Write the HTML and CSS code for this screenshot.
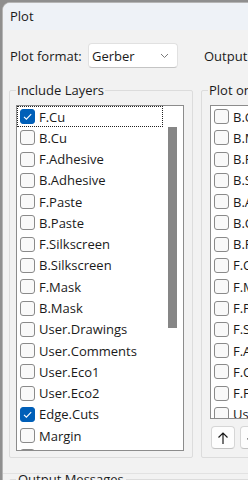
FILE: index.html
```html
<!DOCTYPE html>
<html lang="en">
  <head>
    <meta charset="UTF-8" />
    <meta name="viewport" content="width=device-width, initial-scale=1.0" />
    <title>Plot</title>
    <link rel="stylesheet" href="styles.css">
  </head>
  <body>
    <div class="window">
      <div class="titlebar">Plot</div>

      <div class="format-row">
        <span class="format-label">Plot format:</span>
        <div class="combo">
          <span>Gerber</span>
          <svg class="chevron" width="9" height="6" viewBox="0 0 9 6">
            <path d="M1 1 L4.5 4.5 L8 1" fill="none" stroke="#7a7a7a" stroke-width="1" />
          </svg>
        </div>
        <span class="output-label">Output directory:</span>
      </div>

      <div class="columns">
        <fieldset class="group layers-group">
          <legend>Include Layers</legend>
          <div class="listbox">
            <ul class="items">
              <li class="item focused"><span class="check checked"></span>F.Cu</li>
              <li class="item"><span class="check"></span>B.Cu</li>
              <li class="item"><span class="check"></span>F.Adhesive</li>
              <li class="item"><span class="check"></span>B.Adhesive</li>
              <li class="item"><span class="check"></span>F.Paste</li>
              <li class="item"><span class="check"></span>B.Paste</li>
              <li class="item"><span class="check"></span>F.Silkscreen</li>
              <li class="item"><span class="check"></span>B.Silkscreen</li>
              <li class="item"><span class="check"></span>F.Mask</li>
              <li class="item"><span class="check"></span>B.Mask</li>
              <li class="item"><span class="check"></span>User.Drawings</li>
              <li class="item"><span class="check"></span>User.Comments</li>
              <li class="item"><span class="check"></span>User.Eco1</li>
              <li class="item"><span class="check"></span>User.Eco2</li>
              <li class="item"><span class="check checked"></span>Edge.Cuts</li>
              <li class="item"><span class="check"></span>Margin</li>
              <li class="item"><span class="check"></span>B.Courtyard</li>
            </ul>
            <div class="scrollbar"><div class="thumb"></div></div>
          </div>
        </fieldset>

        <fieldset class="group plot-on-group">
          <legend>Plot on All Layers</legend>
          <div class="listbox narrow">
            <ul class="items">
              <li class="item"><span class="check"></span>B.Cu</li>
              <li class="item"><span class="check"></span>B.Mask</li>
              <li class="item"><span class="check"></span>B.Paste</li>
              <li class="item"><span class="check"></span>B.Silkscreen</li>
              <li class="item"><span class="check"></span>B.Adhesive</li>
              <li class="item"><span class="check"></span>B.Courtyard</li>
              <li class="item"><span class="check"></span>B.Fab</li>
              <li class="item"><span class="check"></span>F.Courtyard</li>
              <li class="item"><span class="check"></span>F.Mask</li>
              <li class="item"><span class="check"></span>F.Paste</li>
              <li class="item"><span class="check"></span>F.Silkscreen</li>
              <li class="item"><span class="check"></span>F.Adhesive</li>
              <li class="item"><span class="check"></span>F.Cu</li>
              <li class="item"><span class="check"></span>F.Fab</li>
              <li class="item"><span class="check"></span>User.Drawings</li>
            </ul>
          </div>
          <div class="buttons">
            <button class="icon-btn">
              <svg width="12" height="14" viewBox="0 0 12 14">
                <path d="M6 13 V2 M1.5 6.5 L6 2 L10.5 6.5" fill="none" stroke="#1a1a1a" stroke-width="1.2" />
              </svg>
            </button>
            <button class="icon-btn">
              <svg width="12" height="14" viewBox="0 0 12 14">
                <path d="M6 1 V12 M1.5 7.5 L6 12 L10.5 7.5" fill="none" stroke="#1a1a1a" stroke-width="1.2" />
              </svg>
            </button>
          </div>
        </fieldset>
      </div>

      <div class="splitter"></div>
      <fieldset class="group messages-group">
        <legend>Output Messages</legend>
      </fieldset>
    </div>
  </body>
</html>
```

FILE: styles.css
```css
html,
body {
  margin: 0;
  height: 100%;
  overflow: hidden;
}
body {
  background-color: #8f8f8f;
  font-family: "Open Sans", "Noto Sans", sans-serif;
  font-size: 13px;
  color: #1a1a1a;
}
.window {
  margin: 2px 0 0 2px;
  width: 440px;
  height: 540px;
  background-color: #f2f2f2;
  border: 1px solid #b5b5b5;
  border-radius: 8px 0 0 0;
  overflow: hidden;
}
.titlebar {
  height: 27px;
  line-height: 27px;
  padding-left: 7px;
  background-color: #eef2f7;
}
.format-row {
  display: flex;
  align-items: center;
  margin-top: 13px;
  padding-left: 7px;
  height: 25px;
}
.format-label {
  width: 78px;
}
.combo {
  display: flex;
  align-items: center;
  justify-content: space-between;
  box-sizing: border-box;
  width: 90px;
  height: 25px;
  padding: 0 8px 0 3px;
  background-color: #fff;
  border: 1px solid #e1e1e1;
  border-bottom-color: #c4c4c4;
  border-radius: 4px;
}
.output-label {
  margin-left: 26px;
}
.columns {
  display: flex;
  gap: 8px;
  margin-top: 14px;
  margin-left: 6px;
}
.group {
  margin: 0;
  min-width: 0;
  border: 1px solid #dcdcdc;
  border-radius: 2px;
}
.group legend {
  padding: 0 1px;
  line-height: 16px;
}
.layers-group {
  box-sizing: border-box;
  width: 184px;
  padding: 7px 8px 6px 6px;
}
.plot-on-group {
  box-sizing: border-box;
  width: 220px;
  padding: 7px 0 7px 6px;
}
.listbox {
  display: flex;
  box-sizing: border-box;
  height: 346px;
  background-color: #fff;
  border: 1px solid #8c8c8c;
  overflow: hidden;
}
.listbox.narrow {
  height: 314px;
  margin-left: 2px;
}
.items {
  list-style: none;
  margin: 0;
  padding: 0;
  flex: 1;
}
.layers-group .items {
  flex: 0 0 146px;
}
.item {
  display: flex;
  align-items: center;
  box-sizing: border-box;
  height: 21.27px;
  padding-left: 3px;
  white-space: nowrap;
}
.item.focused {
  outline: 1px dotted #222;
  outline-offset: -1px;
}
.check {
  box-sizing: border-box;
  flex: 0 0 15px;
  height: 15px;
  margin-right: 4px;
  border: 1px solid #8a8a8a;
  border-radius: 3px;
  background-color: #f9f9f9;
}
.check.checked {
  border-color: #005fb8;
  background-color: #005fb8;
  background-image: url("data:image/svg+xml,%3Csvg xmlns='http://www.w3.org/2000/svg' width='13' height='13' viewBox='0 0 13 13'%3E%3Cpath d='M3 6.8 L5.4 9.2 L10.2 4.2' fill='none' stroke='%23fff' stroke-width='1.1'/%3E%3C/svg%3E");
  background-position: center;
  background-repeat: no-repeat;
}
.scrollbar {
  flex: 1;
  padding: 21px 0 0 5px;
}
.thumb {
  width: 9px;
  height: 201px;
  background-color: #868686;
}
.buttons {
  display: flex;
  gap: 5px;
  margin-top: 7px;
  margin-left: 3px;
}
.icon-btn {
  display: flex;
  align-items: center;
  justify-content: center;
  width: 24px;
  height: 23px;
  padding: 0;
  background-color: #fdfdfd;
  border: 1px solid #d6d6d6;
  border-bottom-color: #c2c2c2;
  border-radius: 4px;
}
.splitter {
  margin-top: 15px;
  border-top: 1px solid #e2e2e2;
}
.messages-group {
  margin: -3px 0 0 6px;
  width: 420px;
  height: 60px;
  padding: 0 6px;
}
.messages-group legend {
  padding: 0 2px;
}
```
